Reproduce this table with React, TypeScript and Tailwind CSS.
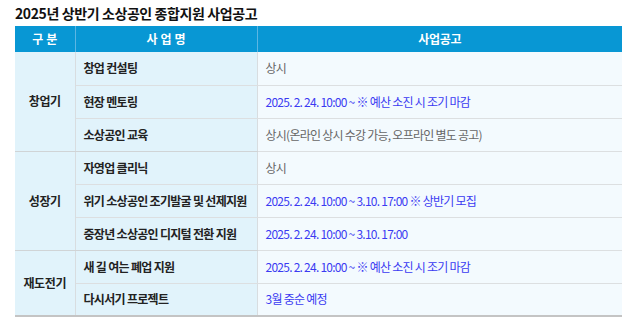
import React from "react";

const font = { fontFamily: '"Noto Sans CJK KR", "Noto Sans", sans-serif' };

type Row = { cat?: string; span?: number; name: string; text: string; blue: boolean };

const rows: Row[] = [
  { cat: "창업기", span: 3, name: "창업 컨설팅", text: "상시", blue: false },
  { name: "현장 멘토링", text: "2025. 2. 24. 10:00 ~ ※ 예산 소진 시 조기 마감", blue: true },
  { name: "소상공인 교육", text: "상시(온라인 상시 수강 가능, 오프라인 별도 공고)", blue: false },
  { cat: "성장기", span: 3, name: "자영업 클리닉", text: "상시", blue: false },
  { name: "위기 소상공인 조기발굴 및 선제지원", text: "2025. 2. 24. 10:00 ~ 3.10. 17:00 ※ 상반기 모집", blue: true },
  { name: "중장년 소상공인 디지털 전환 지원", text: "2025. 2. 24. 10:00 ~ 3.10. 17:00", blue: true },
  { cat: "재도전기", span: 2, name: "새 길 여는 폐업 지원", text: "2025. 2. 24. 10:00 ~ ※ 예산 소진 시 조기 마감", blue: true },
  { name: "다시서기 프로젝트", text: "3월 중순 예정", blue: true },
];

export default function App() {
  return (
    <div className="w-[633px] h-[328px] bg-white" style={font}>
      <div className="pl-[15px] pt-[4px]">
        <h1 className="text-[14px] font-bold leading-[19px] text-[#111] tracking-[-0.4px]">
          2025년 상반기 소상공인 종합지원 사업공고
        </h1>
        <table className="mt-[3px] w-[607px] table-fixed border-collapse text-[12px]">
          <colgroup>
            <col className="w-[60px]" />
            <col className="w-[182px]" />
            <col className="w-[365px]" />
          </colgroup>
          <thead>
            <tr className="h-[26px] bg-[#0897d4] text-white font-bold">
              <th className="border-r border-[#5cb6e3] font-bold tracking-[3px] pl-[3px]">구분</th>
              <th className="border-r border-[#5cb6e3] font-bold tracking-[3px] pl-[3px]">사업명</th>
              <th className="font-bold tracking-[-0.3px]">사업공고</th>
            </tr>
          </thead>
          <tbody>
            {rows.map((r, i) => {
              const groupEnd = i === 2 || i === 5;
              const last = i === rows.length - 1;
              return (
                <tr key={i} className="h-[33px]">
                  {r.cat && (
                    <td
                      rowSpan={r.span}
                      className="bg-[#e1f3fb] border-r border-[#d8dde0] text-center font-bold text-[#222] border-b border-b-[#d0d4d6] tracking-[-0.4px]"
                      style={r.cat === "재도전기" ? { borderBottom: "2px solid #c4c4c4" } : undefined}
                    >
                      {r.cat}
                    </td>
                  )}
                  <td
                    className={`bg-[#e1f3fb] border-r border-[#d8dde0] pl-[8px] font-bold text-[#222] whitespace-nowrap tracking-[-0.7px] ${
                      last ? "border-b-2 border-b-[#c4c4c4]" : groupEnd ? "border-b border-b-[#d0d4d6]" : "border-b border-b-[#dcdfe1]"
                    }`}
                  >
                    {r.name}
                  </td>
                  <td
                    className={`bg-[#f3fafe] pl-[8px] whitespace-nowrap ${r.blue ? "text-[#3b3bf2]" : "text-[#666]"} ${
                      last ? "border-b-2 border-b-[#c4c4c4]" : "border-b border-b-[#dcdfe1]"
                    }`}
                  >
                    <span className="tracking-[-0.75px]">{r.text}</span>
                  </td>
                </tr>
              );
            })}
          </tbody>
        </table>
      </div>
    </div>
  );
}
